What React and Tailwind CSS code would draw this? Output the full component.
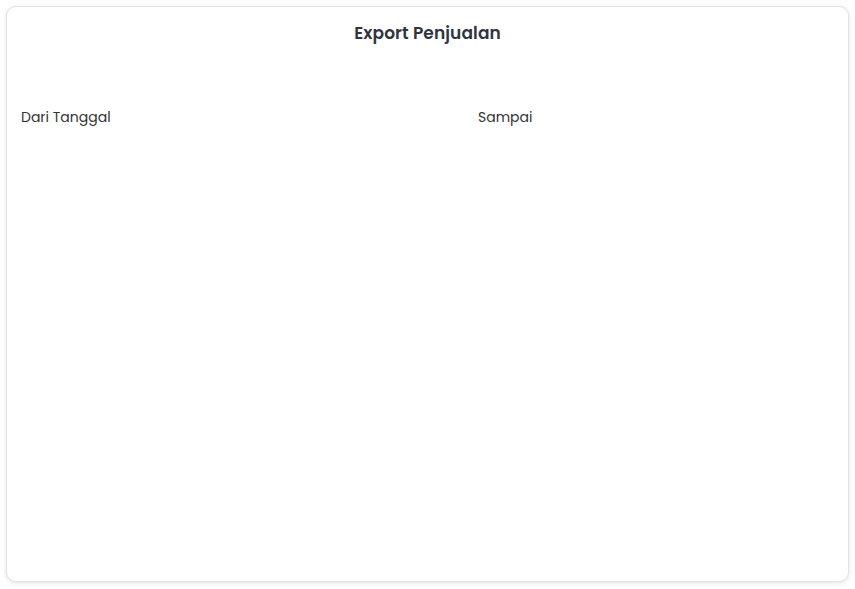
export default function App() {
  return (
    <div className="w-[855px] h-[589px] bg-white p-[6px] pb-[7px]" style={{ fontFamily: '"Poppins", "Inter", "Liberation Sans", sans-serif' }}>
      <div className="h-full rounded-[10px] border border-[#e3e3e3] shadow-[0_1px_4px_rgba(0,0,0,0.12)] bg-white px-[14px]">
        <h1 className="pt-[14px] text-center text-[17px] leading-[24px] font-semibold text-[#2f3440] tracking-[0.1px]">Export Penjualan</h1>
        <div className="mt-[62px] grid grid-cols-[457px_1fr]">
          <div className="text-[14px] leading-[20px] text-[#333]">Dari Tanggal</div>
          <div className="text-[14px] leading-[20px] text-[#333]">Sampai</div>
        </div>
      </div>
    </div>
  );
}
